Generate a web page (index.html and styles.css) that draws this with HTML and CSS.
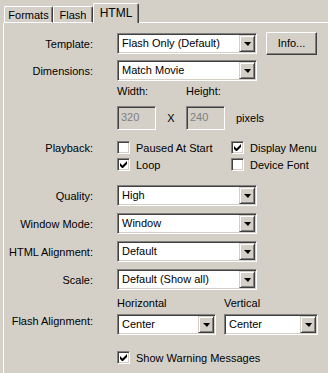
FILE: index.html
```html
<!DOCTYPE html>
<html lang="en">
<head>
<meta charset="UTF-8">
<title>Publish Settings - HTML</title>
<link rel="stylesheet" href="styles.css">
</head>
<body>
<div class="tabs">
  <div class="tab t-formats">Formats</div>
  <div class="tab t-flash">Flash</div>
  <div class="tab active">HTML</div>
  <div class="tab-fill"></div>
</div>
<div class="panel">

  <div class="row r-template">
    <div class="label">Template:</div>
    <div class="ctl">
      <div class="combo w-wide"><span class="combo-text">Flash Only (Default)</span><span class="combo-btn"><i class="arrow"></i></span></div>
      <div class="button">Info...</div>
    </div>
  </div>

  <div class="row r-combo">
    <div class="label">Dimensions:</div>
    <div class="ctl">
      <div class="combo w-wide"><span class="combo-text">Match Movie</span><span class="combo-btn"><i class="arrow"></i></span></div>
    </div>
  </div>

  <div class="row r-caption">
    <div class="label"></div>
    <div class="ctl">
      <span class="cap-w">Width:</span>
      <span>Height:</span>
    </div>
  </div>

  <div class="row r-size">
    <div class="label"></div>
    <div class="ctl">
      <div class="field">320</div>
      <span class="times">X</span>
      <div class="field">240</div>
      <span class="unit">pixels</span>
    </div>
  </div>

  <div class="row r-check">
    <div class="label">Playback:</div>
    <div class="ctl">
      <label class="check c-left"><span class="box"></span>Paused At Start</label>
      <label class="check"><span class="box on"><svg viewBox="0 0 7 7" width="7" height="7"><path d="M0 2v3l2 2h1l4-4V0L2.5 4.5z" fill="#000"/></svg></span>Display Menu</label>
    </div>
  </div>

  <div class="row r-check r-loop">
    <div class="label"></div>
    <div class="ctl">
      <label class="check c-left"><span class="box on"><svg viewBox="0 0 7 7" width="7" height="7"><path d="M0 2v3l2 2h1l4-4V0L2.5 4.5z" fill="#000"/></svg></span>Loop</label>
      <label class="check"><span class="box"></span>Device Font</label>
    </div>
  </div>

  <div class="row r-combo r-quality">
    <div class="label">Quality:</div>
    <div class="ctl">
      <div class="combo w-wide"><span class="combo-text">High</span><span class="combo-btn"><i class="arrow"></i></span></div>
    </div>
  </div>

  <div class="row r-combo">
    <div class="label">Window Mode:</div>
    <div class="ctl">
      <div class="combo w-wide"><span class="combo-text">Window</span><span class="combo-btn"><i class="arrow"></i></span></div>
    </div>
  </div>

  <div class="row r-combo">
    <div class="label">HTML Alignment:</div>
    <div class="ctl">
      <div class="combo w-wide"><span class="combo-text">Default</span><span class="combo-btn"><i class="arrow"></i></span></div>
    </div>
  </div>

  <div class="row r-combo">
    <div class="label">Scale:</div>
    <div class="ctl">
      <div class="combo w-wide"><span class="combo-text">Default (Show all)</span><span class="combo-btn"><i class="arrow"></i></span></div>
    </div>
  </div>

  <div class="row r-align">
    <div class="label">Flash Alignment:</div>
    <div class="ctl align-grid">
      <div class="align-col">
        <span class="align-cap">Horizontal</span>
        <div class="combo w-half"><span class="combo-text">Center</span><span class="combo-btn"><i class="arrow"></i></span></div>
      </div>
      <div class="align-col">
        <span class="align-cap">Vertical</span>
        <div class="combo w-vert"><span class="combo-text">Center</span><span class="combo-btn"><i class="arrow"></i></span></div>
      </div>
    </div>
  </div>

  <div class="row r-check r-warn">
    <div class="label"></div>
    <div class="ctl">
      <label class="check"><span class="box on"><svg viewBox="0 0 7 7" width="7" height="7"><path d="M0 2v3l2 2h1l4-4V0L2.5 4.5z" fill="#000"/></svg></span>Show Warning Messages</label>
    </div>
  </div>

</div>
</body>
</html>
```
FILE: styles.css
```css
* {
    box-sizing: border-box;
}

body {
    margin: 0;
    background-color: #d4d0c8;
    color: #000000;
    font-family: "Liberation Sans", Arial, sans-serif;
    font-size: 11px;
    width: 328px;
    height: 373px;
    overflow: hidden;
}

/* tab strip */
.tabs {
    display: flex;
    align-items: flex-end;
    height: 23px;
    padding-left: 4px;
}

.tab {
    height: 17px;
    padding-top: 2px;
    border-top: 1px solid #ffffff;
    border-left: 1px solid #ffffff;
    border-right: 1px solid #404040;
    border-bottom: 1px solid #ffffff;
    border-radius: 2px 2px 0 0;
    box-shadow: inset -1px 0 #808080;
    line-height: 13px;
    text-align: center;
}

.t-formats {
    width: 49px;
}

.t-flash {
    width: 40px;
}

.tab.active {
    width: 46px;
    height: 20px;
    padding-top: 3px;
    border-bottom: none;
    font-size: 12px;
}

.tab-fill {
    flex: 1;
    border-bottom: 1px solid #ffffff;
}

/* page body */
.panel {
    margin-left: 3px;
    border-left: 1px solid #ffffff;
    height: 350px;
    padding-top: 9px;
}

.row {
    display: flex;
    align-items: center;
}

.label {
    width: 89px;
    margin-right: 24px;
    text-align: right;
    flex-shrink: 0;
}

.ctl {
    display: flex;
    align-items: center;
}

.r-template {
    height: 23px;
    margin-bottom: 5px;
}

.r-combo {
    height: 21px;
    margin-bottom: 7px;
}

.r-caption {
    height: 14px;
    margin-top: -4px;
    margin-bottom: 8px;
}

.cap-w {
    width: 69px;
}

.r-size {
    height: 24px;
    margin-bottom: 10px;
}

.r-check {
    height: 15px;
    margin-bottom: 2px;
}

.r-loop {
    margin-bottom: 13px;
}

/* combo box */
.combo {
    display: flex;
    height: 21px;
    border: 1px solid;
    border-color: #808080 #ffffff #ffffff #808080;
    box-shadow: inset 1px 1px #404040, inset -1px -1px #d4d0c8;
    background-color: #ffffff;
    padding: 1px;
}

.w-wide {
    width: 140px;
}

.w-half {
    width: 99px;
}

.w-vert {
    width: 94px;
}

.combo-text {
    flex: 1;
    padding-left: 3px;
    line-height: 17px;
    white-space: nowrap;
    overflow: hidden;
}

.combo-btn {
    width: 16px;
    height: 17px;
    display: flex;
    align-items: center;
    justify-content: center;
    background-color: #d4d0c8;
    border: 1px solid;
    border-color: #d4d0c8 #404040 #404040 #d4d0c8;
    box-shadow: inset 1px 1px #ffffff, inset -1px -1px #808080;
}

.arrow {
    width: 0;
    height: 0;
    border-left: 4px solid transparent;
    border-right: 3px solid transparent;
    border-top: 4px solid #000000;
    margin-top: 1px;
}

.button {
    width: 51px;
    height: 23px;
    margin-left: 9px;
    border: 1px solid;
    border-color: #ffffff #404040 #404040 #ffffff;
    box-shadow: inset -1px -1px #808080;
    text-align: center;
    line-height: 20px;
}

/* disabled edit fields */
.field {
    width: 39px;
    height: 24px;
    border: 1px solid;
    border-color: #808080 #ffffff #ffffff #808080;
    box-shadow: inset 1px 1px #404040, inset -1px -1px #d4d0c8;
    color: #808080;
    padding-left: 3px;
    line-height: 21px;
}

.times {
    width: 30px;
    text-align: center;
    color: #000000;
}

.unit {
    margin-left: 11px;
}

/* check boxes */
.check {
    display: flex;
    align-items: center;
    white-space: nowrap;
}

.c-left {
    width: 114px;
}

.box {
    width: 13px;
    height: 13px;
    margin-right: 6px;
    border: 1px solid;
    border-color: #808080 #ffffff #ffffff #808080;
    box-shadow: inset 1px 1px #404040, inset -1px -1px #d4d0c8;
    background-color: #ffffff;
    display: flex;
    align-items: center;
    justify-content: center;
}

/* flash alignment */
.r-align {
    margin-bottom: 15px;
}

.r-align .label {
    align-self: flex-end;
    line-height: 21px;
    padding-bottom: 3px;
}

.align-grid {
    gap: 8px;
    align-items: flex-end;
}

.align-col {
    display: flex;
    flex-direction: column;
}

.align-cap {
    height: 14px;
    margin-bottom: 3px;
}
```
